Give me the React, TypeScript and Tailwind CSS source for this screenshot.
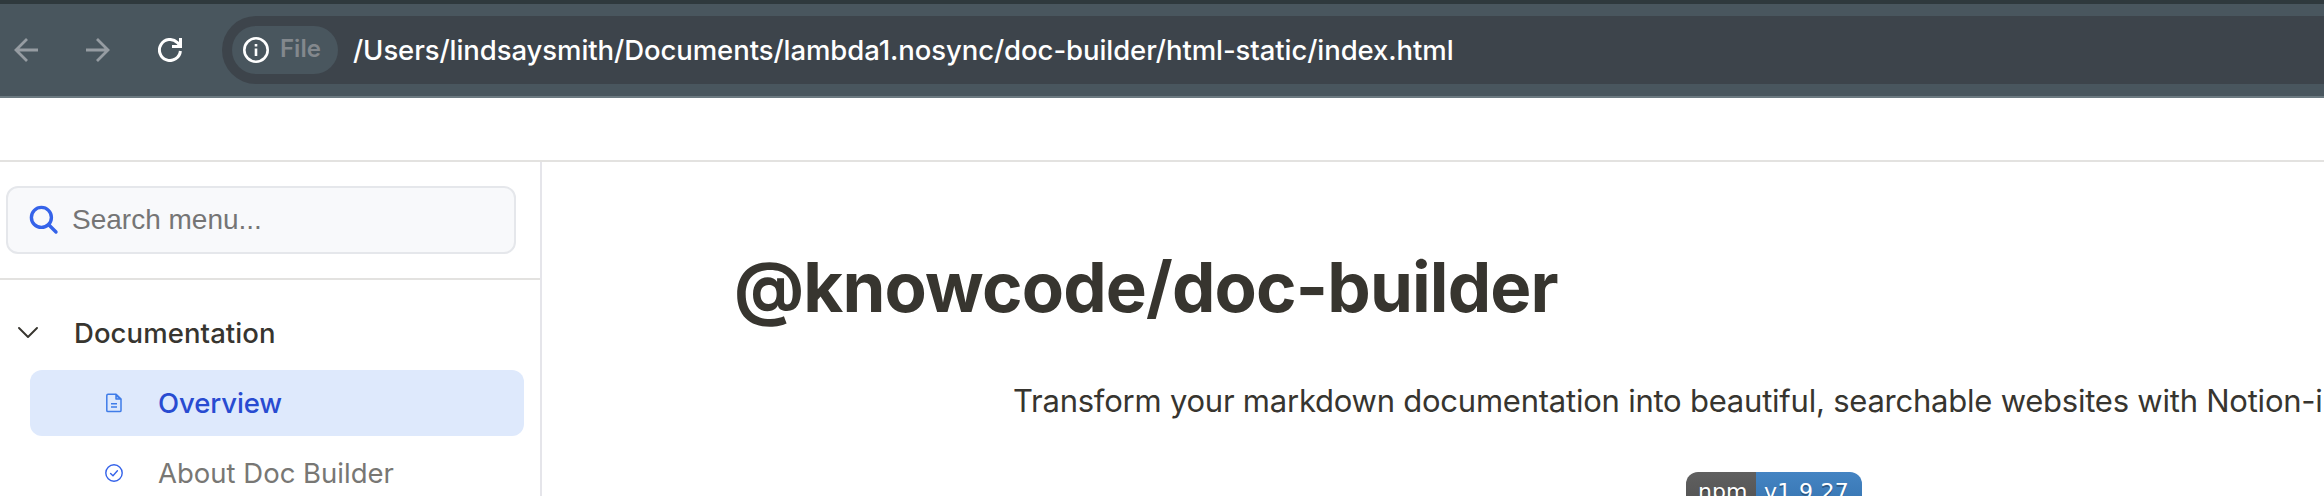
import React from "react";

function ToolbarIcon({ d, color, className }: { d: string; color: string; className: string }) {
  return (
    <svg className={className} width="24" height="24" viewBox="0 0 24 24" fill="none" stroke={color} strokeWidth="2.8">
      <path d={d} />
    </svg>
  );
}

function BrowserBar() {
  return (
    <div className="flex h-[98px] shrink-0 items-center border-t-4 border-b-2 border-t-[#2f393d] border-b-[#6c7a81] bg-[#49565e] pl-[14px]">
      <ToolbarIcon className="shrink-0" color="#969ca2" d="M24 12H2M13 1L2 12L13 23" />
      <ToolbarIcon className="ml-12 shrink-0" color="#969ca2" d="M0 12H22M11 1L22 12L11 23" />
      <svg className="ml-12 shrink-0" width="24" height="24" viewBox="0 0 24 24" fill="none" stroke="#fff" strokeWidth="3">
        <path d="M22.4 13A10.5 10.5 0 1 1 19.4 4.6L21.5 7M22.5 0V8.5H14" />
      </svg>
      <div className="ml-10 flex h-[68px] flex-1 items-center rounded-l-full bg-[#3d444b] pl-[10px]">
        <div className="flex h-12 w-[106px] shrink-0 items-center rounded-full bg-[#49565e] pl-[11px]">
          <svg width="26" height="26" viewBox="0 0 26 26" fill="none" stroke="#fff" strokeWidth="2.6">
            <circle cx="13" cy="13" r="11.7" />
            <path d="M13 11.5V19M13 7V9.5" />
          </svg>
          <span className="mb-[2px] ml-[11px] text-[24px] leading-8 font-semibold text-[#83888d]">File</span>
        </div>
        <span className="ml-[15px] text-[27.5px] leading-8 font-medium tracking-[-0.07px] whitespace-nowrap text-white">
          /Users/lindsaysmith/Documents/lambda1.nosync/doc-builder/html-static/index.html
        </span>
      </div>
    </div>
  );
}

function Sidebar() {
  return (
    <aside className="flex w-[542px] shrink-0 flex-col border-r-2 border-[#e5e5ea]">
      <div className="h-[118px] shrink-0 border-b-2 border-[#e3e2e0] pt-6 pl-[6px]">
        <div className="flex h-[68px] w-[510px] items-center rounded-xl border-2 border-[#e5e7eb] bg-[#f8f9fb] pl-[21px]">
          <svg width="30" height="30" viewBox="0 0 30 30" fill="none" stroke="#3563e9" strokeWidth="3.4" strokeLinecap="round">
            <circle cx="12.4" cy="12.4" r="10" />
            <path d="M19.7 19.7L27 27" />
          </svg>
          <span className="ml-[13px] font-['Liberation_Sans',sans-serif] text-[28px] leading-8 text-[#757575]">Search menu...</span>
        </div>
      </div>
      <div className="mt-[20px] flex h-[66px] shrink-0 items-center pl-[18px] text-[#37352f]">
        <svg width="20" height="12" viewBox="0 0 20 12" fill="none" stroke="#37352f" strokeWidth="1.9" strokeLinecap="round" strokeLinejoin="round">
          <path d="M1 1L10 10L19 1" />
        </svg>
        <span className="ml-[36px] text-[27.5px] leading-8 font-medium tracking-[0.08px]">Documentation</span>
      </div>
      <div className="mt-1 ml-[30px] flex h-[66px] w-[494px] shrink-0 items-center rounded-xl bg-[#dee9fc] pl-[75px]">
        <svg width="18" height="20" viewBox="0 0 18 20" fill="none" stroke="#3f7ce8" strokeWidth="1.5" strokeLinejoin="round">
          <path d="M3 1.2H11L16 6V17.4Q16 18.6 14.8 18.6H3Q1.8 18.6 1.8 17.4V2.4Q1.8 1.2 3 1.2ZM6 10.7H12M6 13.9H12" />
          <path d="M11 1.5V6H15.6Z" fill="#3f7ce8" fillOpacity="0.4" />
        </svg>
        <span className="ml-[35px] text-[27.5px] leading-8 font-medium tracking-[-0.1px] text-[#284bd1]">Overview</span>
      </div>
      <div className="mt-1 ml-[30px] flex h-[66px] w-[494px] shrink-0 items-center pl-[75px]">
        <svg width="18" height="18" viewBox="0 0 18 18" fill="none" stroke="#3563e9" strokeWidth="1.4" strokeLinecap="round">
          <circle cx="9" cy="9" r="8.2" />
          <path d="M5.6 9.4L8 11.7L12.4 6.8" />
        </svg>
        <span className="ml-[35px] text-[27.5px] leading-8 text-[#787774]">About Doc Builder</span>
      </div>
    </aside>
  );
}

function NpmBadge() {
  return (
    <div className="mt-[51px] ml-[952px] flex h-10 w-[176px] overflow-hidden rounded-xl font-['DejaVu_Sans',sans-serif] text-[22px] leading-[40px] text-white [text-shadow:0_2px_0_rgba(1,1,1,0.3)]">
      <span className="w-[70px] bg-linear-to-b from-[#606060] to-[#505050] pl-3">npm</span>
      <span className="flex-1 bg-linear-to-b from-[#4484c3] to-[#3573af] pl-2 tracking-[0.3px]">v1.9.27</span>
    </div>
  );
}

export default function App() {
  return (
    <div className="flex h-[496px] w-[2324px] flex-col overflow-hidden bg-white font-['Inter',sans-serif]">
      <BrowserBar />
      <header className="h-16 shrink-0 border-b-2 border-[#e3e2e0]" />
      <div className="flex h-[334px] overflow-hidden">
        <Sidebar />
        <main className="min-w-0 flex-1 overflow-hidden pt-[83px] pl-[192px] text-[#37352f]">
          <h1 className="text-[69px] leading-[84px] font-bold tracking-[-0.85px] whitespace-nowrap">@knowcode/doc-builder</h1>
          <p className="mt-[52px] ml-[279px] text-[31px] leading-[40px] tracking-[-0.23px] whitespace-nowrap">
            Transform your markdown documentation into beautiful, searchable websites with Notion-inspired
          </p>
          <NpmBadge />
        </main>
      </div>
    </div>
  );
}
